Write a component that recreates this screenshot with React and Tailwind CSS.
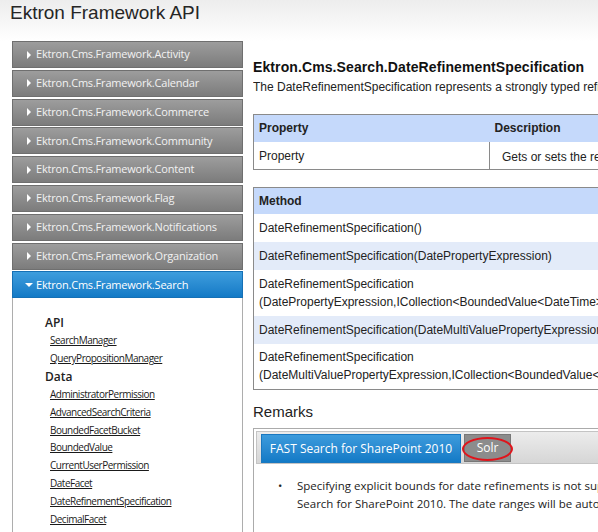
import { useState } from 'react';

const namespaces = [
  'Activity',
  'Calendar',
  'Commerce',
  'Community',
  'Content',
  'Flag',
  'Notifications',
  'Organization',
];

const apiLinks = ['SearchManager', 'QueryPropositionManager'];
const dataLinks = [
  'AdministratorPermission',
  'AdvancedSearchCriteria',
  'BoundedFacetBucket',
  'BoundedValue',
  'CurrentUserPermission',
  'DateFacet',
  'DateRefinementSpecification',
  'DecimalFacet',
];

const methods = [
  ['DateRefinementSpecification()'],
  ['DateRefinementSpecification(DatePropertyExpression)'],
  ['DateRefinementSpecification', '(DatePropertyExpression,ICollection<BoundedValue<DateTime>>)'],
  ['DateRefinementSpecification(DateMultiValuePropertyExpression)'],
  ['DateRefinementSpecification', '(DateMultiValuePropertyExpression,ICollection<BoundedValue<DateTime>>)'],
];

const NavItem = ({ label, open }) => (
  <div
    className={`h-[27px] shrink-0 flex items-center pl-[12px] border text-[11px] tracking-[-0.2px] font-['Open_Sans',sans-serif] ${
      open
        ? 'border-[#1570b5] bg-gradient-to-b from-[#3d9ddd] to-[#127ac6] text-white'
        : 'border-[#6f6f6f] bg-gradient-to-b from-[#9d9d9d] to-[#7c7c7c] text-[#f2f2f2]'
    }`}
  >
    {open ? (
      <svg width="8" height="8" viewBox="0 0 8 8" className="mr-[3px]">
        <path d="M0 2 L8 2 L4 6 Z" fill="white" />
      </svg>
    ) : (
      <svg width="8" height="8" viewBox="0 0 8 8" className="mr-[3px]">
        <path d="M2 0 L6 4 L2 8 Z" fill="white" />
      </svg>
    )}
    <span>Ektron.Cms.Framework.{label}</span>
  </div>
);

export default function App() {
  const [tab, setTab] = useState('fast');

  return (
    <div className="w-[598px] h-[532px] overflow-hidden bg-white font-['Liberation_Sans',Arial,sans-serif] text-[#222]">
      <div className="h-[41px] bg-gradient-to-b from-[#ededed] to-white pl-[10px] pt-[1px] text-[19px] leading-[24px] text-[#262626]">
        Ektron Framework API
      </div>

      <div className="flex">
        {/* sidebar */}
        <div className="ml-[12px] w-[231px] shrink-0 flex flex-col gap-[1.8px]">
          {namespaces.map((n) => (
            <NavItem key={n} label={n} />
          ))}
          <div>
            <NavItem label="Search" open />
            <div className="border-x border-[#adadad] h-[260px] pt-[16px] pl-[32px] font-['Open_Sans',sans-serif]">
              <div className="text-[12px] font-semibold leading-[18px] text-[#222]">API</div>
              {apiLinks.map((l) => (
                <div key={l} className="pl-[5px] text-[10px] tracking-[-0.5px] leading-[17.8px] underline text-[#1a1a1a]">{l}</div>
              ))}
              <div className="text-[12px] font-semibold leading-[18px] text-[#222]">Data</div>
              {dataLinks.map((l) => (
                <div key={l} className="pl-[5px] text-[10px] tracking-[-0.5px] leading-[17.8px] underline text-[#1a1a1a]">{l}</div>
              ))}
            </div>
          </div>
        </div>

        {/* main */}
        <div className="ml-[10px] flex-1 min-w-0 overflow-hidden pt-[17px]">
          <div className="w-[520px]">
            <h1 className="text-[14px] font-bold leading-[18px] tracking-[0.1px] text-[#111]">
              Ektron.Cms.Search.DateRefinementSpecification
            </h1>
            <p className="mt-[3px] text-[12px] leading-[16px] whitespace-nowrap">
              The DateRefinementSpecification represents a strongly typed refinement specification for dates.
            </p>

            <table className="mt-[19px] w-[520px] border border-[#8a8a8a] border-collapse text-[12px]">
              <thead>
                <tr className="bg-[#c5d9fb] h-[27px]">
                  <th className="w-[236px] text-left font-bold px-[5px]">Property</th>
                  <th className="text-left font-bold px-[5px]">Description</th>
                </tr>
              </thead>
              <tbody>
                <tr className="h-[28px] bg-white">
                  <td className="px-[5px] align-top pt-[5px]">Property</td>
                  <td className="px-[12px] border-l border-[#8a8a8a] whitespace-nowrap pt-[3px]">
                    Gets or sets the refinement bounds.
                  </td>
                </tr>
              </tbody>
            </table>

            <table className="mt-[17px] w-[520px] border border-[#8a8a8a] border-collapse text-[12px]">
              <thead>
                <tr className="bg-[#c5d9fb] h-[26px]">
                  <th className="text-left font-bold px-[5px]">Method</th>
                </tr>
              </thead>
              <tbody>
                {methods.map((m, i) => (
                  <tr key={i} className={i % 2 ? 'bg-[#e3ebf9]' : 'bg-white'}>
                    <td className={`px-[5px] whitespace-nowrap ${m.length > 1 ? 'h-[46px] leading-[18px]' : 'h-[28px]'}`}>
                      {m.map((line) => (
                        <div key={line}>{line}</div>
                      ))}
                    </td>
                  </tr>
                ))}
              </tbody>
            </table>

            <div className="mt-[13px] text-[15px] leading-[18px] text-[#222]">Remarks</div>

            <div className="mt-[7px] border border-[#ababab] p-[2px] h-[120px] font-['Open_Sans',sans-serif]">
              <div className="h-[33px] border border-[#c4c4c4] bg-gradient-to-b from-[#ececec] to-[#d6d6d6] pl-[4px] pt-[3px] flex items-end gap-[3px]">
                <button
                  onClick={() => setTab('fast')}
                  className="h-[29px] w-[200px] bg-gradient-to-b from-[#3c9bdc] to-[#127ac6] border border-[#1a78c0] text-white text-[12px]"
                >
                  FAST Search for SharePoint 2010
                </button>
                <button
                  onClick={() => setTab('solr')}
                  className="relative h-[28px] w-[47px] bg-[#8c8c8c] border border-[#777] text-white text-[12px] mb-[1px]"
                >
                  Solr
                  <span className="absolute left-[-3px] top-[2px] w-[51px] h-[24px] rounded-[50%] border-2 border-[#e0141b]" />
                </button>
              </div>
              <ul className="mt-[13px] ml-[22px] text-[11.5px] leading-[18px] text-[#222]">
                {tab === 'fast' ? (
                  <li className="flex">
                    <span className="w-[19px] shrink-0">•</span>
                    <span className="whitespace-nowrap">
                      Specifying explicit bounds for date refinements is not supported by FAST
                      <br />
                      Search for SharePoint 2010. The date ranges will be automatically generated.
                    </span>
                  </li>
                ) : (
                  <li className="flex">
                    <span className="w-[19px] shrink-0">•</span>
                    <span className="whitespace-nowrap">Explicit bounds are supported by Solr.</span>
                  </li>
                )}
              </ul>
            </div>
          </div>
        </div>
      </div>
    </div>
  );
}
